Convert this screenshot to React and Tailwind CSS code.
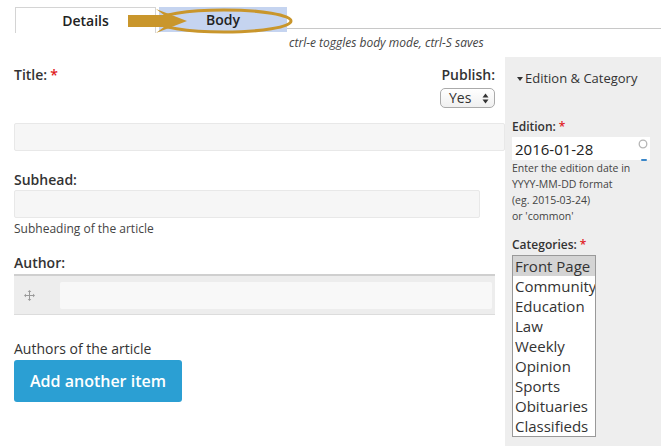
import React from "react";

function DragIcon() {
  return (
    <svg width="11" height="11" viewBox="0 0 11 11" className="text-[#999]">
      <path d="M5.5 1v9M1 5.5h9" stroke="currentColor" strokeWidth="1" />
      <path d="M5.5 0l-1.8 2h3.6zM5.5 11l-1.8-2h3.6zM0 5.5l2-1.8v3.6zM11 5.5l-2-1.8v3.6z" fill="currentColor" />
    </svg>
  );
}

function UpDown() {
  return (
    <svg width="7" height="11" viewBox="0 0 7 11">
      <path d="M3.5 0.5L6.5 4.5H0.5z" fill="#333" />
      <path d="M3.5 10.5L6.5 6.5H0.5z" fill="#333" />
    </svg>
  );
}

function Star() {
  return <span className="text-[#e0191d] ml-[3px]">*</span>;
}

export default function App() {
  const cats = ["Front Page", "Community", "Education", "Law", "Weekly", "Opinion", "Sports", "Obituaries", "Classifieds"];
  return (
    <div
      className="relative w-[661px] h-[446px] overflow-hidden bg-white text-[#333]"
      style={{ fontFamily: '"Open Sans", "Noto Sans", sans-serif' }}
    >
      {/* tabs */}
      <div className="flex pt-[7px] pl-[15px] h-[33px]">
        <div className="w-[141px] h-[26px] border border-b-0 border-[#d4d4d4] bg-white flex items-center justify-center text-[14px] font-semibold text-[#222]">
          Details
        </div>
        <div className="ml-[3px] w-[128px] h-[25px] bg-[#c5d4f0] flex items-center justify-center text-[14px] font-semibold text-[#222]">
          Body
        </div>
        <div className="flex-1 self-start h-[22px] border-b border-[#c8c8c8]" />
      </div>
      <div className="pl-[289px] mt-[2px] h-[15px] text-[12px] leading-[15px] italic text-[#444]">
        ctrl-e toggles body mode, ctrl-S saves
      </div>

      {/* main */}
      <div className="flex mt-[7px] h-[389px]">
        <div className="w-[505px] pl-[14px]">
          <div className="flex justify-between pr-[10px] pt-[9px]">
            <div className="text-[14px] font-semibold leading-[18px]">
              Title:<Star />
            </div>
            <div className="flex flex-col items-end">
              <div className="text-[14px] font-semibold leading-[18px]">Publish:</div>
              <div className="mt-[4px] w-[55px] h-[20px] rounded-[5px] border border-[#aaa] bg-gradient-to-b from-white to-[#f0f0f0] flex items-center justify-between pl-[8px] pr-[5px] text-[14px] leading-[18px]">
                <span>Yes</span>
                <UpDown />
              </div>
            </div>
          </div>
          <div className="mt-[15px] w-[491px] h-[28px] bg-[#f6f6f6] border border-[#e8e8e8] rounded-[2px]" />

          <div className="mt-[20px] text-[14px] font-semibold leading-[18px]">Subhead:</div>
          <div className="mt-[1px] w-[466px] h-[28px] bg-[#f6f6f6] border border-[#e8e8e8] rounded-[2px]" />
          <div className="mt-[3px] text-[12px] leading-[16px] text-[#444]">Subheading of the article</div>

          <div className="mt-[17px] text-[14px] font-semibold leading-[18px]">Author:</div>
          <div className="mt-[2px] w-[481px] border-t-2 border-b border-t-[#cfcfcf] border-b-[#dcdcdc] bg-[#ededed] h-[41px] flex items-center">
            <div className="w-[46px] pl-[10px] flex">
              <DragIcon />
            </div>
            <div className="w-[432px] h-[27px] bg-[#f8f8f8] rounded-[2px]" />
          </div>

          <div className="mt-[24px] text-[14px] leading-[20px] text-[#333]">Authors of the article</div>
          <div className="mt-[1px] w-[168px] h-[42px] rounded-[3px] bg-[#2b9fd3] text-white text-[16px] font-semibold flex items-center justify-center">
            Add another item
          </div>
        </div>

        <div className="w-[156px] bg-[#eeeeee] pl-[7px] pt-[13px]">
          <div className="pl-[5px] flex items-center text-[13px] leading-[16px] text-[#333]">
            <svg width="6" height="4" viewBox="0 0 6 4" className="mr-[2px] mt-[1px]">
              <path d="M0 0h6L3 4z" fill="#333" />
            </svg>
            Edition &amp; Category
          </div>

          <div className="mt-[33px] text-[12px] font-semibold leading-[16px]">
            Edition:<Star />
          </div>
          <div className="mt-[2px] w-[138px] h-[23px] bg-white flex items-center justify-between pl-[3px] pr-[2px] relative">
            <span className="text-[15px] leading-[20px] text-[#222]">2016-01-28</span>
            <svg width="10" height="10" viewBox="0 0 10 10" className="self-start mt-[2px]">
              <circle cx="5" cy="5" r="3.8" fill="none" stroke="#b5b5b5" strokeWidth="1.3" />
            </svg>
            <div className="absolute right-[3px] bottom-[-1px] w-[6px] h-[2px] bg-[#3a86c8] rounded-full" />
          </div>
          <div className="text-[10.5px] leading-[16px] text-[#444]">
            <div>Enter the edition date in</div>
            <div>YYYY-MM-DD format</div>
            <div>(eg. 2015-03-24)</div>
            <div>or 'common'</div>
          </div>

          <div className="mt-[13px] text-[12px] font-semibold leading-[16px]">
            Categories:<Star />
          </div>
          <div className="mt-[2px] w-[84px] border border-[#999] bg-white overflow-hidden">
            {cats.map((c, i) => (
              <div
                key={c}
                className={
                  "h-[20px] pl-[2px] text-[15px] leading-[20px] whitespace-nowrap text-[#333] " +
                  (i === 0 ? "bg-[#d4d4d4]" : "")
                }
              >
                {c}
              </div>
            ))}
          </div>
        </div>
      </div>

      {/* annotation overlay: arrow + ellipse */}
      <svg className="absolute left-0 top-0 pointer-events-none" width="661" height="40" viewBox="0 0 661 40">
        <ellipse cx="224" cy="21" rx="67" ry="11" fill="none" stroke="#c9962c" strokeWidth="3" />
        <polygon points="128,15 164,15 156,9 187,21 156,33 164,27 128,27" fill="#c9962c" />
      </svg>
    </div>
  );
}
